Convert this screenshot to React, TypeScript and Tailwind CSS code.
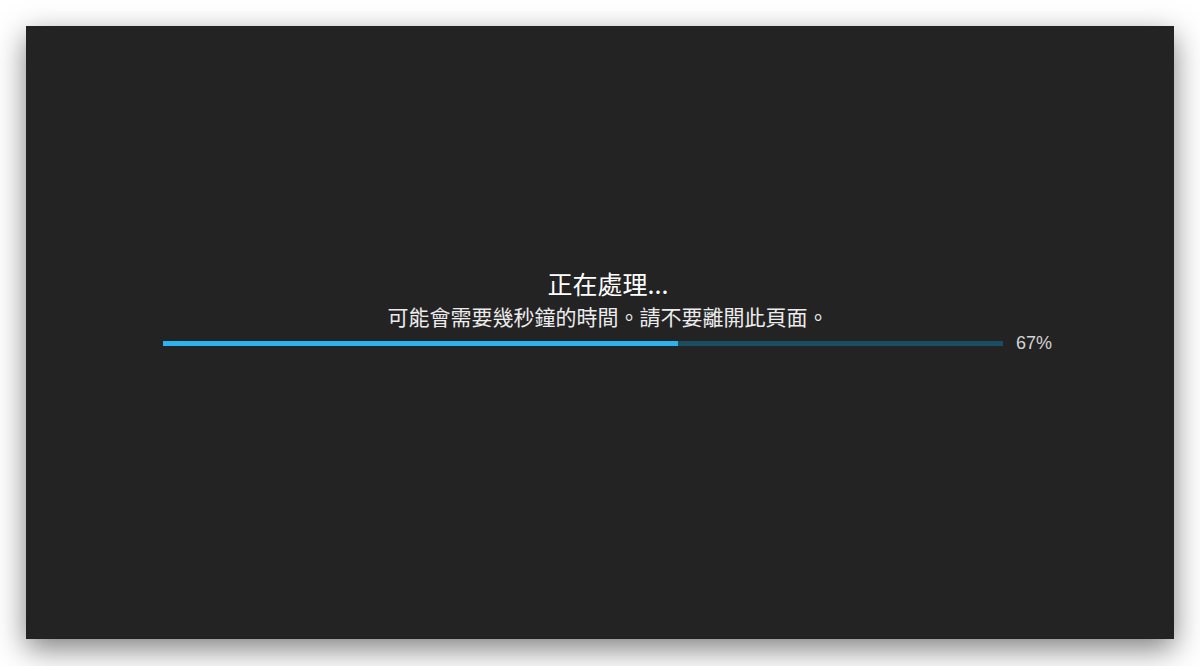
export default function App() {
  const progress = 67;

  return (
    <div className="w-[1200px] h-[666px] bg-white pt-[26px] pl-[26px] overflow-hidden">
      {/* Dark processing panel */}
      <div className="w-[1148px] h-[613px] bg-[#232323] shadow-[0_10px_28px_rgba(0,0,0,0.5)] pt-[243px] pl-[137px]">
        <div className="w-[890px] flex flex-col items-center" style={{ fontFamily: '"Noto Sans CJK TC", "Noto Sans", sans-serif' }}>
          <h1 className="text-[25px] leading-[28px] text-white font-normal">正在處理...</h1>
          <p className="mt-[7px] text-[21px] leading-[24px] text-[#ececec]">可能會需要幾秒鐘的時間。請不要離開此頁面。</p>

          {/* Progress row */}
          <div className="mt-[3px] w-full flex items-center">
            <div className="w-[840px] h-[5px] bg-[#1a4c62] overflow-hidden">
              <div className="h-full bg-[#2ab3ee]" style={{ width: `${(515 / 840) * 100}%` }} />
            </div>
            <span
              className="ml-[13px] text-[18px] leading-[24px] text-[#d4d4d4]"
              style={{ fontFamily: '"Liberation Sans", Arial, sans-serif' }}
            >
              {progress}%
            </span>
          </div>
        </div>
      </div>
    </div>
  );
}
